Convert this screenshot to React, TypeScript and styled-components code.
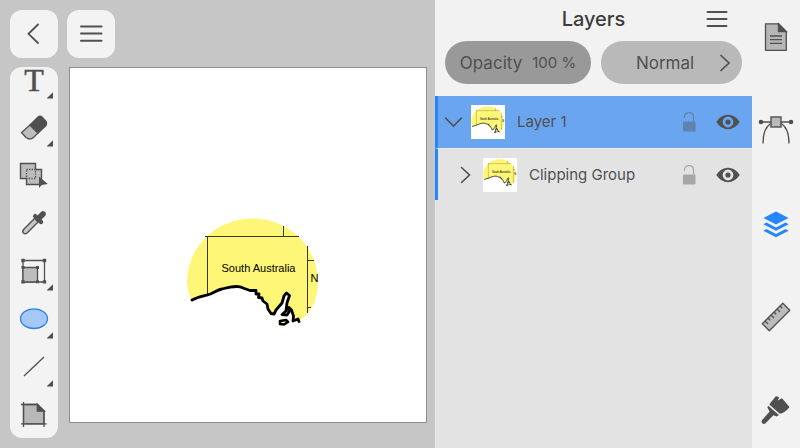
import React from "react";
import styled, { createGlobalStyle } from "styled-components";

const ink = "#505050";
const accent = "#2585fa";

const GlobalStyle = createGlobalStyle`
  * { box-sizing: border-box; }
  body { margin: 0; background: #c6c6c6; font-family: Inter, "Liberation Sans", sans-serif; color: ${ink}; }
  button, select { font: inherit; color: inherit; border: 0; padding: 0; margin: 0; background: none; cursor: pointer; }
  svg { display: block; }
  ul { list-style: none; margin: 0; padding: 0; }
`;

const Shell = styled.div`
  display: grid;
  grid-template-columns: minmax(0, 1fr) 317px 48px;
  height: 100vh;
  overflow: hidden;
`;

const Editor = styled.main`
  display: flex;
  flex-direction: column;
  gap: 9px;
  padding: 10px 8px 10px 10px;
  min-height: 0;
`;

const TopBar = styled.header`
  display: flex;
  gap: 9px;
`;

const TopButton = styled.button`
  width: 48px;
  height: 48px;
  border-radius: 12px;
  background: #f3f3f3;
`;

const Workspace = styled.div`
  display: flex;
  flex: 1;
  gap: 11px;
  min-height: 0;
`;

const ToolStrip = styled.nav`
  display: flex;
  flex-direction: column;
  justify-content: flex-end;
  flex: none;
  width: 48px;
  border-radius: 12px;
  background: #f3f3f3;
`;

const ToolButton = styled.button`
  flex: none;
  width: 48px;
  height: 48px;
`;

const Canvas = styled.section`
  flex: 1;
  min-width: 0;
  margin-bottom: 15px;
  background: #fff;
  border: 1px solid #8e8e8e;
`;

const Artwork = styled.svg`
  width: 100%;
  height: 100%;
`;

const Panel = styled.aside`
  display: flex;
  flex-direction: column;
  background: #e3e3e3;
`;

const PanelHead = styled.div`
  padding: 0 10px;
  height: 96px;
  background: #f2f2f2;
`;

const TitleRow = styled.div`
  display: grid;
  grid-template-columns: 48px 1fr 48px;
  align-items: center;
  height: 37px;
`;

const Title = styled.h1`
  grid-column: 2;
  margin: 0;
  text-align: center;
  font-size: 20px;
  line-height: 24px;
  font-weight: 500;
  color: #3c3c3c;
`;

const MenuButton = styled.button`
  width: 48px;
  height: 36px;
`;

const PillRow = styled.div`
  display: grid;
  grid-template-columns: 146fr 141fr;
  gap: 10px;
  padding-top: 4px;
`;

const OpacityPill = styled.button`
  display: flex;
  align-items: center;
  justify-content: center;
  gap: 10px;
  height: 43px;
  border-radius: 22px;
  background: #999;
  font-size: 17px;
`;

const OpacityValue = styled.span`
  font-size: 15px;
`;

const BlendPill = styled.label`
  display: grid;
  grid-template-columns: 1fr 34px;
  align-items: center;
  height: 43px;
  border-radius: 22px;
  background: #b9b9b9;
`;

const BlendSelect = styled.select`
  grid-area: 1 / 1 / 2 / 3;
  height: 43px;
  width: 100%;
  padding: 0 34px 0 21px;
  appearance: none;
  text-align: center;
  text-align-last: center;
  font-size: 17px;
`;

const BlendArrow = styled.svg`
  grid-area: 1 / 2 / 2 / 3;
  pointer-events: none;
`;

const LayerList = styled.ul`
  display: flex;
  flex-direction: column;
`;

const LayerRow = styled.li<{ $selected?: boolean; $nested?: boolean }>`
  display: flex;
  align-items: center;
  height: 52px;
  padding-left: ${(p) => (p.$nested ? 12 : 0)}px;
  border-left: 3px solid ${accent};
  background: ${(p) => (p.$selected ? "#6aa5f0" : "#e3e3e3")};

  & + & {
    border-top: 1px solid #ececec;
  }
`;

const RowButton = styled.button<{ $width: number }>`
  flex: none;
  display: grid;
  place-items: center;
  width: ${(p) => p.$width}px;
  height: 36px;
`;

const Thumb = styled.svg`
  flex: none;
  width: 34px;
  height: 34px;
  margin-left: 3px;
  background: #fff;
`;

const LayerName = styled.span`
  flex: 1;
  margin-left: 12px;
  font-size: 15px;
  line-height: 24px;
  white-space: nowrap;
`;

const Rail = styled.nav`
  display: flex;
  flex-direction: column;
  justify-content: space-between;
  padding: 14px 0 13px;
  background: #f2f2f2;
`;

const coast =
  "M192 300 C197 297 203 296 207 295 C213 294 216 290 222 289 C230 287 238 285 243 288 L250 290.5 L256 290.5 L256 294 L259 294 L258.5 297.5 L262 298 L263 301 L267 304 L268 309 L271 313.5 L274 314 L276 310 L282 303 L284 296 L286.5 293 L289.5 295.5 L287 303 L286 311 L282 314.5 L287 315 L289 312 L289 307.5 L291.5 310 L293.5 316 L293 321 L298 319 L299 321.5";

function MapDrawing() {
  return (
    <g fill="none">
      <path
        d={coast + " C311 313 318 300 318 282 A65.5 63.5 0 0 0 187 282 C187 289 189 295 192 300 Z"}
        fill="#fdf677"
      />
      <path
        d="M207.5 295 V236.5 M205 236.5 H299 M283.5 226 V236.5 M307.5 246 V313 M307.5 260.5 H314 M307.5 307.5 H311"
        stroke="#3a3820"
        strokeWidth="1"
      />
      <path d={coast} stroke="#000" strokeWidth="2.8" strokeLinejoin="round" strokeLinecap="round" />
      <path d="M280 321 L286 320 L288 322 L284 324.5 L280 324 Z" fill="#fdf677" stroke="#000" strokeWidth="2.6" strokeLinejoin="round" />
      <g fill="#000" fontFamily="Liberation Sans, sans-serif" fontSize="11">
        <text x="258.5" y="272" textAnchor="middle">South Australia</text>
        <text x="310.5" y="282">N</text>
      </g>
    </g>
  );
}

function Glyph({ children }: { children: React.ReactNode }) {
  return (
    <svg width="48" height="48" viewBox="0 0 48 48" fill="none" stroke={ink} strokeWidth="1.3" aria-hidden="true">
      {children}
    </svg>
  );
}

const tools: { name: string; more?: boolean; art: React.ReactNode }[] = [
  {
    name: "Text tool",
    more: true,
    art: (
      <text x="24" y="37" textAnchor="middle" fontFamily="Liberation Serif, serif" fontSize="32" fill={ink} strokeWidth="0.5">T</text>
    ),
  },
  {
    name: "Eraser",
    more: true,
    art: (
      <>
        <path d="M20 23 L11.5 30.5 L16 35.5 Q20 38.5 23.5 35.5 L28 31Z" fill="#bdbdbd" />
        <path d="M20 23 L28 15 Q30 13.5 32 15 L36 19.5 Q37.5 21.5 36 23.5 L28 31Z" fill={ink} />
      </>
    ),
  },
  {
    name: "Shape builder",
    art: (
      <>
        <path d="M10.5 13.5H25.5V19.5H31.5V34.5H16.5V28.5H10.5Z" fill="#bdbdbd" stroke="none" />
        <path d="M16.5 28.5H10.5V13.5H25.5V19.5H31.5V34.5H16.5V28.5" strokeWidth="1.4" />
        <path d="M16.5 19.5H25.5V28.5H16.5Z" strokeDasharray="1.3 1.3" />
        <path d="M29 26.5V38L31.6 35L37.8 34Z" fill={ink} stroke="none" />
      </>
    ),
  },
  {
    name: "Eyedropper",
    art: (
      <>
        <path d="M26 19L13.8 31.2Q12 33.5 13.4 35Q15.2 36.6 17.4 34.8L29.5 22.5Z" fill="#c6c6c6" strokeWidth="1.4" />
        <path d="M25.2 18.2L31 24" strokeWidth="4.4" strokeLinecap="round" />
        <path d="M28 21L33 16" strokeWidth="5.6" strokeLinecap="round" />
      </>
    ),
  },
  {
    name: "Scale",
    more: true,
    art: (
      <>
        <path d="M13 14.5H34.5V36H13Z" />
        <path d="M13 21.5H27.5V36H13Z" fill="#bdbdbd" />
        <path
          d="M11.3 12.8h3.4v3.4h-3.4z M32.8 12.8h3.4v3.4h-3.4z M32.8 34.2h3.4v3.4h-3.4z M11.3 34.2h3.4v3.4h-3.4z M11.5 20h3v3h-3z M26 20h3v3h-3z M26 34.3h3v3h-3z"
          fill={ink}
          stroke="none"
        />
      </>
    ),
  },
  {
    name: "Ellipse",
    more: true,
    art: <ellipse cx="24" cy="24.7" rx="13.5" ry="9.8" fill="#a6c8f8" stroke="#2f82e6" />,
  },
  { name: "Line", more: true, art: <path d="M14 34L34 15" /> },
  {
    name: "Artboard",
    art: (
      <>
        <path d="M13.5 14.5H27.5L34 21V33.8H13.5Z" fill="#b8b8b8" />
        <path d="M11 14.5H28 M13.5 12V37 M11 33.8H36.7 M34 20V37" />
        <path d="M27.3 14.3V21.2H34.3Z" fill={ink} />
      </>
    ),
  },
];

const panels: { name: string; art: React.ReactNode }[] = [
  {
    name: "Document",
    art: (
      <>
        <path d="M13.5 9.8H26.5L34.3 17.6V36.3H13.5Z" fill="#b6b6b6" strokeLinejoin="round" />
        <path d="M26.5 9.8V17.6H34.3Z" fill={ink} />
        <path d="M18 22H30 M18 25.7H30 M18 29.4H30" />
      </>
    ),
  },
  {
    name: "Path",
    art: (
      <>
        <path d="M9 15H39 M19.5 16C14 19 11 27 11 36.5 M28.5 16C34 19 37 27 37 36.5" />
        <rect x="19" y="10" width="10" height="10" fill="#bababa" strokeWidth="1.4" />
        <circle cx="9" cy="15" r="2.3" fill={ink} stroke="none" />
        <circle cx="39" cy="15" r="2.3" fill={ink} stroke="none" />
      </>
    ),
  },
  {
    name: "Layers",
    art: (
      <g fill={accent} stroke="none">
        <path d="M24 10.5L36.5 17L24 23.5L11.5 17Z" />
        <path d="M11.3 23.3L14.5 21.6L24 26.5L33.5 21.6L36.7 23.3L24 29.8Z" />
        <path d="M11.3 29.8L14.5 28.1L24 33L33.5 28.1L36.7 29.8L24 36.3Z" />
      </g>
    ),
  },
  {
    name: "Measure",
    art: (
      <>
        <path d="M10.3 29.7L30.8 9.2L37.8 16.2L17.3 36.7Z" fill="#bcbcbc" strokeLinejoin="round" />
        <path d="M13 27L16 30 M16 24L18.2 26.2 M19 21L22 24 M22 18L24.2 20.2 M25 15L28 18 M28 12L30.2 14.2" />
      </>
    ),
  },
  {
    name: "Style",
    art: (
      <g fill={ink} stroke="none">
        <path d="M17.5 17L24 9L27.3 10.6L25.6 13.6L30 11.2L37.5 20C35.5 23 33 25 29.3 26.5L27.5 26.5L17.6 17.8Z" />
        <path d="M16.2 18.8L27 28L24.6 29.4L21.4 28.2L13.6 36.3Q11.8 37.7 10.2 36.2Q8.8 34.6 10.2 33L17.6 24.6L15.4 20.6Z" />
      </g>
    ),
  },
];

function LockIcon() {
  return (
    <svg width="16" height="22" viewBox="0 0 16 22" fill="none" aria-hidden="true" opacity="0.4">
      <path d="M3.5 7V6Q3.5 1.7 8.2 1.7Q12.5 1.7 12.5 6V11" stroke={ink} strokeWidth="1.2" />
      <rect x="2" y="10.5" width="12.5" height="10" rx="0.8" fill={ink} />
    </svg>
  );
}

function EyeIcon() {
  return (
    <svg width="24" height="16" viewBox="0 0 24 16" aria-hidden="true">
      <path fill={ink} fillRule="evenodd" d="M0.3 8Q5 0.8 12 0.8T23.7 8Q19 15.2 12 15.2T0.3 8Z M12 2.6A5.4 5.4 0 1 0 12 13.4A5.4 5.4 0 1 0 12 2.6Z" />
      <circle cx="12" cy="8" r="2.6" fill={ink} />
    </svg>
  );
}

const layers = [
  { name: "Layer 1", open: true, nested: false },
  { name: "Clipping Group", open: false, nested: true },
];

export default function App() {
  return (
    <>
      <GlobalStyle />
      <Shell>
        <Editor>
          <TopBar>
            <TopButton aria-label="Back">
              <Glyph><path d="M28 14.5L18.5 23.8L28 33" strokeWidth="1.8" strokeLinecap="round" /></Glyph>
            </TopButton>
            <TopButton aria-label="Menu">
              <Glyph><path d="M14 16.4H34.5 M14 23.6H34.5 M14 30.8H34.5" strokeWidth="2" strokeLinecap="round" /></Glyph>
            </TopButton>
          </TopBar>
          <Workspace>
            <ToolStrip aria-label="Tools">
              {tools.map((tool) => (
                <ToolButton key={tool.name} aria-label={tool.name}>
                  <Glyph>
                    {tool.art}
                    {tool.more && <path d="M36.5 44.5H43V38.2Z" fill={ink} stroke="none" />}
                  </Glyph>
                </ToolButton>
              ))}
            </ToolStrip>
            <Canvas aria-label="Artboard">
              <Artwork viewBox="70 68 356 354" role="img" aria-label="Map of South Australia">
                <MapDrawing />
              </Artwork>
            </Canvas>
          </Workspace>
        </Editor>

        <Panel>
          <PanelHead>
            <TitleRow>
              <Title>Layers</Title>
              <MenuButton aria-label="Layer menu">
                <svg width="48" height="36" viewBox="0 0 48 36" aria-hidden="true">
                  <path d="M13.5 11H32.5 M13.5 18H32.5 M13.5 25H32.5" stroke={ink} strokeWidth="2" strokeLinecap="round" />
                </svg>
              </MenuButton>
            </TitleRow>
            <PillRow>
              <OpacityPill>
                Opacity <OpacityValue>100 %</OpacityValue>
              </OpacityPill>
              <BlendPill>
                <BlendSelect aria-label="Blend mode" defaultValue="Normal">
                  <option>Normal</option>
                </BlendSelect>
                <BlendArrow width="34" height="20" viewBox="0 0 34 20" fill="none" aria-hidden="true">
                  <path d="M13 2.5L21 10L13 17.5" stroke={ink} strokeWidth="1.7" strokeLinecap="round" />
                </BlendArrow>
              </BlendPill>
            </PillRow>
          </PanelHead>
          <LayerList>
            {layers.map((layer) => (
              <LayerRow key={layer.name} $selected={layer.open} $nested={layer.nested}>
                <RowButton $width={30} aria-label={"Expand " + layer.name} aria-expanded={layer.open}>
                  <svg width="20" height="20" viewBox="0 0 20 20" fill="none" aria-hidden="true">
                    <path d={layer.open ? "M2.5 6L10.5 14L18.5 6" : "M6.5 2.5L14.5 10L6.5 17.5"} stroke={ink} strokeWidth="1.6" strokeLinecap="round" />
                  </svg>
                </RowButton>
                <Thumb viewBox="186 214 136 136" aria-hidden="true"><MapDrawing /></Thumb>
                <LayerName>{layer.name}</LayerName>
                <RowButton $width={30} aria-label={"Lock " + layer.name}><LockIcon /></RowButton>
                <RowButton $width={48} aria-label={"Show " + layer.name}><EyeIcon /></RowButton>
              </LayerRow>
            ))}
          </LayerList>
        </Panel>

        <Rail aria-label="Panels">
          {panels.map((panel) => (
            <ToolButton key={panel.name} aria-label={panel.name}>
              <Glyph>{panel.art}</Glyph>
            </ToolButton>
          ))}
        </Rail>
      </Shell>
    </>
  );
}
